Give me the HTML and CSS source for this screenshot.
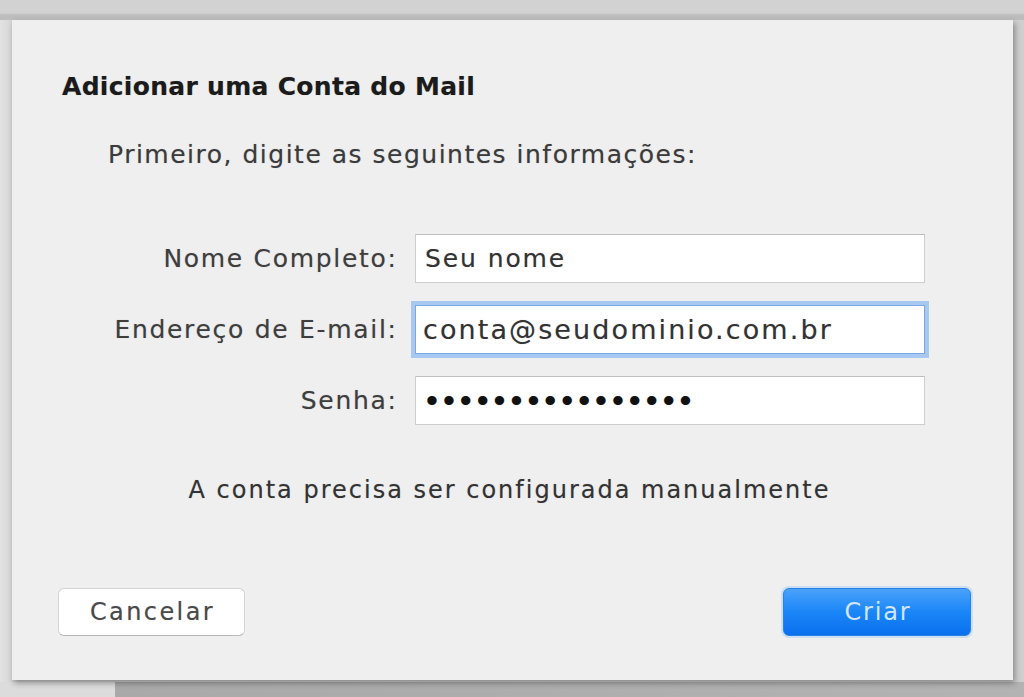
FILE: index.html
```html
<!DOCTYPE html>
<html lang="pt-BR">
<head>
<meta charset="utf-8">
<title>Adicionar uma Conta do Mail</title>
<link rel="stylesheet" href="styles.css">
</head>
<body>
<div class="stage">
  <div class="dialog">
    <h1 class="title">Adicionar uma Conta do Mail</h1>
    <p class="intro">Primeiro, digite as seguintes informações:</p>
    <div class="form">
      <label class="label">Nome Completo:</label>
      <div class="field">Seu nome</div>
      <label class="label">Endereço de E-mail:</label>
      <div class="field field-focus">conta@seudominio.com.br</div>
      <label class="label">Senha:</label>
      <div class="field field-pass">••••••••••••••••</div>
    </div>
    <p class="note">A conta precisa ser configurada manualmente</p>
    <div class="actions">
      <button class="btn btn-cancel">Cancelar</button>
      <button class="btn btn-primary">Criar</button>
    </div>
  </div>
</div>
</body>
</html>
```
FILE: styles.css
```css
html, body {
  margin: 0;
  padding: 0;
}
body {
  width: 1024px;
  height: 697px;
  overflow: hidden;
  font-family: "DejaVu Sans", sans-serif;
  background:
    linear-gradient(to right, #dcdcdc 0, #dcdcdc 115px, #a9a9a9 115px, #b3b3b3 100%) 0 682px / 100% 15px no-repeat,
    linear-gradient(#d2d2d2 0, #d2d2d2 13px, #bdbdbd 15px, #bdbdbd 20px) 0 0 / 100% 20px no-repeat,
    linear-gradient(to right, #e2e2e2 0, #d6d6d6 12px, #cfcfcf 12px) 0 0 / 100% 100% no-repeat;
}
.stage {
  padding: 20px 0 0 12px;
}
.dialog {
  box-sizing: border-box;
  width: 1001px;
  height: 660px;
  background: #efefef;
  box-shadow: 2px 3px 6px rgba(0,0,0,0.35);
  padding: 52px 42px 44px 46px;
  display: flex;
  flex-direction: column;
  color: #2e2e2e;
  text-shadow: 0 0 1px rgba(0,0,0,0.25);
}
.title {
  margin: 0 0 0 4px;
  font-size: 25px;
  line-height: 30px;
  font-weight: bold;
  letter-spacing: 0.3px;
  color: #1b1b1b;
}
.intro {
  margin: 38px 0 0 50px;
  font-size: 25px;
  line-height: 30px;
  letter-spacing: 1.5px;
  color: #3b3b3b;
}
.form {
  margin-top: 64px;
  display: grid;
  grid-template-columns: 338px 510px;
  column-gap: 19px;
  row-gap: 22px;
  align-items: center;
}
.label {
  text-align: right;
  font-size: 25px;
  letter-spacing: 1.7px;
  margin-right: -1.7px;
  color: #3e3e3e;
}
.field {
  box-sizing: border-box;
  height: 49px;
  background: #fff;
  border: 1px solid #cdcdcd;
  border-top-color: #bdbdbd;
  padding: 0 9px;
  display: flex;
  align-items: center;
  font-size: 25px;
  letter-spacing: 1.9px;
  color: #333;
}
.field-focus {
  border-color: #78a9e6;
  box-shadow: 0 0 0 4px #a6c8f1;
  font-size: 27px;
  letter-spacing: 2.1px;
  padding-left: 7px;
}
.field-pass {
  font-family: "Liberation Sans", sans-serif;
  font-size: 34px;
  letter-spacing: 5px;
  padding-left: 10px;
  color: #111;
}
.note {
  margin: 50px 0 0 0;
  padding-right: 10px;
  text-align: center;
  font-size: 24px;
  line-height: 30px;
  letter-spacing: 2px;
  color: #333;
}
.actions {
  margin-top: auto;
  display: flex;
  justify-content: space-between;
}
.btn {
  box-sizing: border-box;
  width: 187px;
  height: 48px;
  border-radius: 6px;
  font-family: "DejaVu Sans", sans-serif;
  font-size: 24px;
  letter-spacing: 2.4px;
  padding: 0 0 0 2px;
}
.btn-cancel {
  background: #fff;
  border: 1px solid #d3d3d3;
  border-bottom-color: #b9b9b9;
  color: #4a4a4a;
  text-shadow: 0 0 1px rgba(0,0,0,0.25);
}
.btn-primary {
  width: 188px;
  border: 1px solid #2a7fe6;
  background: linear-gradient(#4aa2fb, #1a86f7 50%, #0a70ee);
  color: #d3e6fd;
  letter-spacing: 1.8px;
  box-shadow: 0 0 0 2px rgba(170,205,245,0.5);
}
```
